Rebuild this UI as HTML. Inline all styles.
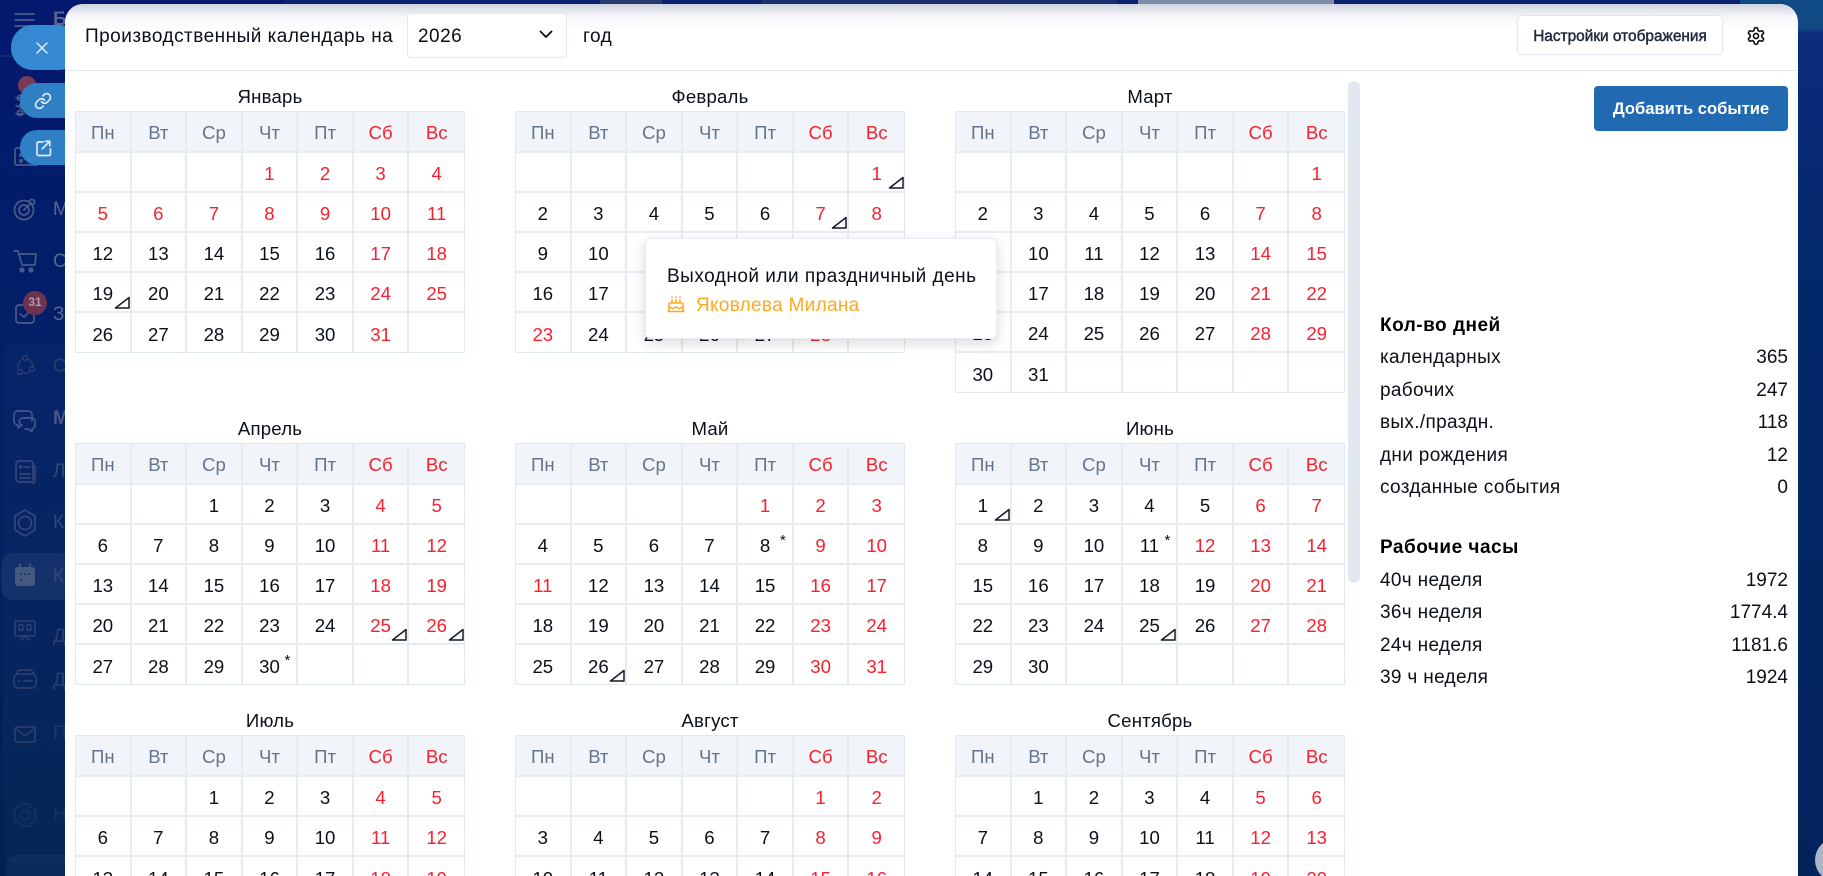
<!DOCTYPE html>
<html lang="ru"><head><meta charset="utf-8"><title>Производственный календарь</title>
<style>
*{box-sizing:border-box}
html,body{margin:0;padding:0;width:1823px;height:876px;overflow:hidden}
body{position:relative;background:linear-gradient(180deg,#04186e 0%,#021f68 35%,#012154 100%);font-family:"Liberation Sans",sans-serif;color:#0b0f19}
.abs{position:absolute}
.side{position:absolute;color:#566690;font-size:19px;left:53px;line-height:22px;white-space:nowrap}
.modal{position:absolute;left:65px;top:4px;width:1733px;height:880px;background:#fff;border-radius:18px 18px 0 0;overflow:hidden}
.modal:before{content:"";position:absolute;left:0;right:0;top:0;height:28px;background:linear-gradient(180deg,rgba(190,195,212,.72),rgba(225,228,236,.3) 45%,rgba(255,255,255,0))}
.hl{position:absolute;left:65px;top:70px;width:1733px;height:1px;background:#e2e8f0}
.t{position:absolute;font-size:19px;letter-spacing:.48px;line-height:24px;white-space:nowrap;margin-top:1px}
.m{position:absolute;width:390px}
.m b{position:absolute;left:0;right:0;top:-26px;text-align:center;font-weight:400;font-size:18.6px;letter-spacing:.2px;line-height:24px;color:#0b0f19}
table{border-collapse:separate;border-spacing:0;width:390px;table-layout:fixed;border-left:1px solid #e2e8f0;border-top:1px solid #e2e8f0}
td,th{position:relative;padding:4px 0 0;text-align:center;font-weight:400;font-size:18.6px;border-right:2px solid #e7ecf3;border-bottom:2px solid #e7ecf3;height:40px;line-height:34px}
tr>*:last-child{border-right:1px solid #e2e8f0}
tr:last-child td{border-bottom:1px solid #e2e8f0}
th{height:41px;background:#f1f5f9;color:#64748b;padding-top:2px;line-height:37px}
.r{color:#f9202e}
th.r{color:#f9202e}
td svg{position:absolute;right:0;bottom:2px;width:16px;height:13px}
td sup{position:absolute;left:calc(50% + 15px);top:4px;font-size:15px;line-height:24px;color:#0b0f19}
.n{letter-spacing:-1.5px;padding-left:3px}
.st{position:absolute;left:1380px;width:408px;display:flex;justify-content:space-between;font-size:19px;line-height:24px;color:#0b0f19;margin-top:1px}
.st span:first-child{letter-spacing:.33px}
.h{position:absolute;left:1380px;font-size:19px;letter-spacing:.5px;font-weight:700;line-height:24px;color:#000;margin-top:1px}
</style></head><body>

<!-- top + right background bits -->
<div class="abs" style="left:285px;top:0;width:1538px;height:6px;background:#0a2270"></div>
<div class="abs" style="left:600px;top:0;width:62px;height:6px;background:#283c73"></div>
<div class="abs" style="left:762px;top:0;width:355px;height:6px;background:#1c2f70"></div>
<div class="abs" style="left:1138px;top:0;width:196px;height:6px;background:#7c8aa6"></div>
<div class="abs" style="left:1740px;top:0;width:83px;height:34px;background:linear-gradient(180deg,#0f4a86,#124a84 80%,#0d2a7c)"></div>
<div class="abs" style="left:1798px;top:34px;width:25px;height:842px;background:linear-gradient(180deg,#0d2a7c,#03286a 30%,#03235c)"></div>
<div class="abs" style="left:1815px;top:838px;width:44px;height:44px;border-radius:50%;background:#aeb5c4"></div>

<!-- dimmed sidebar -->
<svg class="abs" style="left:0;top:0" width="65" height="876" viewBox="0 0 65 876" fill="none" stroke="#4a5b88" stroke-width="1.7" stroke-linecap="round" stroke-linejoin="round">
<path d="M15 14h19M15 20h19M15 26h19"/>
<path d="M2 56h10" stroke="#1a2f70"/>
<rect x="3" y="343" width="70" height="520" rx="12" fill="#fff" fill-opacity=".022" stroke="none"/>
<rect x="1" y="553" width="70" height="47" rx="12" fill="#fff" fill-opacity=".06" stroke="none"/>
<rect x="5" y="855" width="70" height="40" rx="12" fill="#fff" fill-opacity=".04" stroke="none"/>
<circle cx="27" cy="85" r="9" fill="#7a3a55" stroke="none"/>
<path d="M16 98h8M16 106h8M16 114h8"/><circle cx="20" cy="98" r="2.5"/><circle cx="22" cy="106" r="2.5"/><circle cx="20" cy="113" r="2.5"/>
<path d="M20 148h-3a2 2 0 0 0-2 2v13a2 2 0 0 0 2 2h20"/><circle cx="21" cy="155" r="1.2"/><circle cx="21" cy="161" r="1.2"/>
<circle cx="24" cy="210" r="9.5"/><circle cx="24" cy="210" r="5"/><path d="M24 210l7-7"/><circle cx="32" cy="202" r="2.5"/>
<path d="M14 251h4l4 14h13l1-11H19"/><circle cx="22" cy="270" r="1.8" fill="#4a5b88"/><circle cx="31" cy="270" r="1.8" fill="#4a5b88"/>
<rect x="16" y="305" width="18" height="18" rx="3"/><path d="M20 314l4 3 6-6"/>
<circle cx="35" cy="303" r="12" fill="#6f3352" stroke="none"/>
<g stroke="#2b3d6e" stroke-width="1.5"><circle cx="25" cy="358" r="2.4"/><circle cx="20" cy="372" r="2.4"/><circle cx="32" cy="369" r="2.4"/><path d="M21 360a9.5 9.5 0 0 0-3 8M28 359a9.5 9.5 0 0 1 5 7M23 373a9.5 9.5 0 0 0 7-1"/></g>
<g stroke="#44558a"><path d="M32 421v-6a4 4 0 0 0-4-4H18a4 4 0 0 0-4 4v6a4 4 0 0 0 4 4v3l4-3"/><path d="M21 425a4 4 0 0 1 1-7h10a4 4 0 0 1 3 3v5a4 4 0 0 1-3 3v3l-4-3h-3"/></g>
<g stroke="#34467a"><rect x="16" y="461" width="17" height="21" rx="3"/><path d="M33 466h2v15a2 2 0 0 1-2 2h-1M20 474h10M20 478h10M24 467h6"/><circle cx="20.5" cy="467" r="1"/>
<path d="M25 510l10 6v14l-10 6-10-6v-14z"/><circle cx="25" cy="523" r="6.5"/></g>
<rect x="15" y="567" width="20" height="19" rx="3" fill="#45597f" stroke="none"/><path d="M20 564v5M30 564v5" stroke="#45597f"/>
<circle cx="21" cy="574" r="1" fill="#1a2f66" stroke="none"/><circle cx="25" cy="574" r="1" fill="#1a2f66" stroke="none"/><circle cx="29" cy="574" r="1" fill="#1a2f66" stroke="none"/><circle cx="21" cy="580" r="1" fill="#1a2f66" stroke="none"/>
<g stroke="#2c3e6c"><rect x="15" y="621" width="20" height="15" rx="1"/><path d="M25 636l-4 4M25 636l4 4M19 625h4v5h-4zM27 625h4v5h-4z"/>
<rect x="14" y="674" width="22" height="14" rx="4"/><path d="M16 674l3-4h12l3 4M24 681h8M19 681h.5"/>
<rect x="15" y="727" width="20" height="15" rx="2"/><path d="M16 729l9 7 9-7"/></g>
<g stroke="#1a2f60"><circle cx="25" cy="815" r="4.5"/><path d="M21 804h8l2 3 3 1 2 3-1 4 1 4-2 3-3 1-2 3h-8l-2-3-3-1-2-3 1-4-1-4 2-3 3-1z"/></g>
</svg>
<div class="side" style="top:9px;font-weight:700">Б</div>
<div class="side" style="top:199px">Мои</div>
<div class="side" style="top:251px">Сервисы</div>
<div class="side" style="top:304px">Задачи</div>
<div class="side" style="top:356px;color:#2b3d6e">Сообщество</div>
<div class="side" style="top:408px;font-weight:700;color:#47578a">Мессенджер</div>
<div class="side" style="top:461px;color:#34467a">Лента</div>
<div class="side" style="top:512px;color:#34467a">Компания</div>
<div class="side" style="top:566px;color:#34467a">Календарь</div>
<div class="side" style="top:626px;color:#2c3e6c">Документы</div>
<div class="side" style="top:670px;color:#2c3e6c">Диск</div>
<div class="side" style="top:723px;color:#233567">Почта</div>
<div class="side" style="top:804px;color:#1a2f60">Настройки</div>
<div class="abs" style="left:28px;top:296px;width:14px;text-align:center;font-size:12px;font-weight:700;color:#b69aa9;line-height:13px">31</div>

<!-- floating buttons -->
<div class="abs" style="left:11px;top:25px;width:70px;height:45px;border-radius:22px;background:#3588d2"></div>
<div class="abs" style="left:20px;top:83px;width:70px;height:35px;border-radius:17px;background:#2f7fc5"></div>
<div class="abs" style="left:20px;top:130px;width:70px;height:35px;border-radius:17px;background:#2f7fc5"></div>
<svg class="abs" style="left:36px;top:42px" width="12" height="12" viewBox="0 0 12 12" fill="none" stroke="#dcecfa" stroke-width="1.5" stroke-linecap="round"><path d="M1 1l10 10M11 1L1 11"/></svg>
<svg class="abs" style="left:34px;top:92px" width="18" height="18" viewBox="0 0 24 24" fill="none" stroke="#dcecfa" stroke-width="2.2" stroke-linecap="round" stroke-linejoin="round"><path d="M10 13a5 5 0 0 0 7.54.54l3-3a5 5 0 0 0-7.07-7.07l-1.72 1.71"/><path d="M14 11a5 5 0 0 0-7.54-.54l-3 3a5 5 0 0 0 7.07 7.07l1.71-1.71"/></svg>
<svg class="abs" style="left:34px;top:139px" width="18" height="18" viewBox="0 0 24 24" fill="none" stroke="#dcecfa" stroke-width="2.2" stroke-linecap="round" stroke-linejoin="round"><path d="M12 4H6a2 2 0 0 0-2 2v14a2 2 0 0 0 2 2h14a2 2 0 0 0 2-2v-7"/><path d="M11 13L21 3M15 3h6v6"/></svg>

<div class="modal"></div>
<div class="hl"></div>

<!-- header -->
<div class="t" style="left:85px;top:24px">Производственный календарь на</div>
<div class="abs" style="left:407px;top:13px;width:160px;height:45px;border:1px solid #e2e8f0;border-radius:4px;background:#fff"></div>
<div class="t" style="left:418px;top:24px">2026</div>
<svg class="abs" style="left:539px;top:30px" width="14" height="9" viewBox="0 0 14 9" fill="none" stroke="#111" stroke-width="1.9" stroke-linecap="round" stroke-linejoin="round"><path d="M1.5 1.5L7 7l5.5-5.5"/></svg>
<div class="t" style="left:583px;top:24px">год</div>
<div class="abs" style="left:1517px;top:15px;width:206px;height:40px;border:1px solid #e2e8f0;border-radius:5px;background:#fff;text-align:center;font-size:15.4px;line-height:41px;color:#1e293b;-webkit-text-stroke:.45px #1e293b;box-shadow:0 1px 2px rgba(0,0,0,.04)">Настройки отображения</div>
<svg class="abs" style="left:1746px;top:26px" width="20" height="20" viewBox="0 0 24 24" fill="none" stroke="#111" stroke-width="2" stroke-linecap="round" stroke-linejoin="round"><path d="M12.22 2h-.44a2 2 0 0 0-2 2v.18a2 2 0 0 1-1 1.73l-.43.25a2 2 0 0 1-2 0l-.15-.08a2 2 0 0 0-2.73.73l-.22.38a2 2 0 0 0 .73 2.73l.15.1a2 2 0 0 1 1 1.72v.51a2 2 0 0 1-1 1.74l-.15.09a2 2 0 0 0-.73 2.73l.22.38a2 2 0 0 0 2.73.73l.15-.08a2 2 0 0 1 2 0l.43.25a2 2 0 0 1 1 1.73V20a2 2 0 0 0 2 2h.44a2 2 0 0 0 2-2v-.18a2 2 0 0 1 1-1.73l.43-.25a2 2 0 0 1 2 0l.15.08a2 2 0 0 0 2.73-.73l.22-.39a2 2 0 0 0-.73-2.73l-.15-.08a2 2 0 0 1-1-1.74v-.5a2 2 0 0 1 1-1.74l.15-.09a2 2 0 0 0 .73-2.73l-.22-.38a2 2 0 0 0-2.73-.73l-.15.08a2 2 0 0 1-2 0l-.43-.25a2 2 0 0 1-1-1.73V4a2 2 0 0 0-2-2z"/><circle cx="12" cy="12" r="3"/></svg>

<!-- scrollbar -->
<div class="abs" style="left:1348px;top:81px;width:12px;height:502px;border-radius:6px;background:#e2e8f0"></div>

<!-- right panel -->
<div class="abs" style="left:1594px;top:86px;width:194px;height:45px;border-radius:4px;background:#2169b1;color:#fff;text-align:center;font-size:16.6px;font-weight:700;line-height:46px">Добавить событие</div>
<div class="h" style="top:313px">Кол-во дней</div>
<div class="st" style="top:345px"><span>календарных</span><span>365</span></div>
<div class="st" style="top:378px"><span>рабочих</span><span>247</span></div>
<div class="st" style="top:410px"><span>вых./праздн.</span><span>118</span></div>
<div class="st" style="top:443px"><span>дни рождения</span><span>12</span></div>
<div class="st" style="top:475px"><span>созданные события</span><span>0</span></div>
<div class="h" style="top:535px">Рабочие часы</div>
<div class="st" style="top:568px"><span>40ч неделя</span><span>1972</span></div>
<div class="st" style="top:600px"><span>36ч неделя</span><span>1774.4</span></div>
<div class="st" style="top:633px"><span>24ч неделя</span><span>1181.6</span></div>
<div class="st" style="top:665px"><span>39 ч неделя</span><span>1924</span></div>

<!-- January -->
<div class="m" style="left:75px;top:111px"><b>Январь</b><table>
<tr><th>Пн<th>Вт<th>Ср<th>Чт<th>Пт<th class="r">Сб<th class="r">Вс</tr>
<tr><td><td><td><td class="r">1<td class="r">2<td class="r">3<td class="r">4</tr>
<tr><td class="r">5<td class="r">6<td class="r">7<td class="r">8<td class="r">9<td class="r">10<td class="r">11</tr>
<tr><td>12<td>13<td>14<td>15<td>16<td class="r">17<td class="r">18</tr>
<tr><td>19<svg viewBox="0 0 16 13" fill="none" stroke="#111827" stroke-width="1.5" stroke-linejoin="round"><path d="M1.5 12H15V1.500z"/></svg><td>20<td>21<td>22<td>23<td class="r">24<td class="r">25</tr>
<tr><td>26<td>27<td>28<td>29<td>30<td class="r">31<td></tr>
</table></div>

<!-- February -->
<div class="m" style="left:515px;top:111px"><b>Февраль</b><table>
<tr><th>Пн<th>Вт<th>Ср<th>Чт<th>Пт<th class="r">Сб<th class="r">Вс</tr>
<tr><td><td><td><td><td><td><td class="r">1<svg viewBox="0 0 16 13" fill="none" stroke="#111827" stroke-width="1.5" stroke-linejoin="round"><path d="M1.5 12H15V1.500z"/></svg></tr>
<tr><td>2<td>3<td>4<td>5<td>6<td class="r">7<svg viewBox="0 0 16 13" fill="none" stroke="#111827" stroke-width="1.5" stroke-linejoin="round"><path d="M1.5 12H15V1.500z"/></svg><td class="r">8</tr>
<tr><td>9<td>10<td class="n">11<td>12<td>13<td class="r">14<td class="r">15</tr>
<tr><td>16<td>17<td class="n">18<td>19<td>20<td class="r">21<td class="r">22</tr>
<tr><td class="r">23<td>24<td>25<td>26<td>27<td class="r">28<td></tr>
</table></div>

<!-- March -->
<div class="m" style="left:955px;top:111px"><b>Март</b><table>
<tr><th>Пн<th>Вт<th>Ср<th>Чт<th>Пт<th class="r">Сб<th class="r">Вс</tr>
<tr><td><td><td><td><td><td><td class="r">1</tr>
<tr><td>2<td>3<td>4<td>5<td>6<td class="r">7<td class="r">8</tr>
<tr><td>9<td>10<td>11<td>12<td>13<td class="r">14<td class="r">15</tr>
<tr><td>16<td>17<td>18<td>19<td>20<td class="r">21<td class="r">22</tr>
<tr><td>23<td>24<td>25<td>26<td>27<td class="r">28<td class="r">29</tr>
<tr><td>30<td>31<td><td><td><td><td></tr>
</table></div>

<!-- April -->
<div class="m" style="left:75px;top:443px"><b>Апрель</b><table>
<tr><th>Пн<th>Вт<th>Ср<th>Чт<th>Пт<th class="r">Сб<th class="r">Вс</tr>
<tr><td><td><td>1<td>2<td>3<td class="r">4<td class="r">5</tr>
<tr><td>6<td>7<td>8<td>9<td>10<td class="r">11<td class="r">12</tr>
<tr><td>13<td>14<td>15<td>16<td>17<td class="r">18<td class="r">19</tr>
<tr><td>20<td>21<td>22<td>23<td>24<td class="r">25<svg viewBox="0 0 16 13" fill="none" stroke="#111827" stroke-width="1.5" stroke-linejoin="round"><path d="M1.5 12H15V1.500z"/></svg><td class="r">26<svg viewBox="0 0 16 13" fill="none" stroke="#111827" stroke-width="1.5" stroke-linejoin="round"><path d="M1.5 12H15V1.500z"/></svg></tr>
<tr><td>27<td>28<td>29<td>30<sup>*</sup><td><td><td></tr>
</table></div>

<!-- May -->
<div class="m" style="left:515px;top:443px"><b>Май</b><table>
<tr><th>Пн<th>Вт<th>Ср<th>Чт<th>Пт<th class="r">Сб<th class="r">Вс</tr>
<tr><td><td><td><td><td class="r">1<td class="r">2<td class="r">3</tr>
<tr><td>4<td>5<td>6<td>7<td>8<sup>*</sup><td class="r">9<td class="r">10</tr>
<tr><td class="r">11<td>12<td>13<td>14<td>15<td class="r">16<td class="r">17</tr>
<tr><td>18<td>19<td>20<td>21<td>22<td class="r">23<td class="r">24</tr>
<tr><td>25<td>26<svg viewBox="0 0 16 13" fill="none" stroke="#111827" stroke-width="1.5" stroke-linejoin="round"><path d="M1.5 12H15V1.500z"/></svg><td>27<td>28<td>29<td class="r">30<td class="r">31</tr>
</table></div>

<!-- June -->
<div class="m" style="left:955px;top:443px"><b>Июнь</b><table>
<tr><th>Пн<th>Вт<th>Ср<th>Чт<th>Пт<th class="r">Сб<th class="r">Вс</tr>
<tr><td>1<svg viewBox="0 0 16 13" fill="none" stroke="#111827" stroke-width="1.5" stroke-linejoin="round"><path d="M1.5 12H15V1.500z"/></svg><td>2<td>3<td>4<td>5<td class="r">6<td class="r">7</tr>
<tr><td>8<td>9<td>10<td>11<sup>*</sup><td class="r">12<td class="r">13<td class="r">14</tr>
<tr><td>15<td>16<td>17<td>18<td>19<td class="r">20<td class="r">21</tr>
<tr><td>22<td>23<td>24<td>25<svg viewBox="0 0 16 13" fill="none" stroke="#111827" stroke-width="1.5" stroke-linejoin="round"><path d="M1.5 12H15V1.500z"/></svg><td>26<td class="r">27<td class="r">28</tr>
<tr><td>29<td>30<td><td><td><td><td></tr>
</table></div>

<!-- July -->
<div class="m" style="left:75px;top:735px"><b>Июль</b><table>
<tr><th>Пн<th>Вт<th>Ср<th>Чт<th>Пт<th class="r">Сб<th class="r">Вс</tr>
<tr><td><td><td>1<td>2<td>3<td class="r">4<td class="r">5</tr>
<tr><td>6<td>7<td>8<td>9<td>10<td class="r">11<td class="r">12</tr>
<tr><td>13<td>14<td>15<td>16<td>17<td class="r">18<td class="r">19</tr>
</table></div>

<!-- August -->
<div class="m" style="left:515px;top:735px"><b>Август</b><table>
<tr><th>Пн<th>Вт<th>Ср<th>Чт<th>Пт<th class="r">Сб<th class="r">Вс</tr>
<tr><td><td><td><td><td><td class="r">1<td class="r">2</tr>
<tr><td>3<td>4<td>5<td>6<td>7<td class="r">8<td class="r">9</tr>
<tr><td>10<td>11<td>12<td>13<td>14<td class="r">15<td class="r">16</tr>
</table></div>

<!-- September -->
<div class="m" style="left:955px;top:735px"><b>Сентябрь</b><table>
<tr><th>Пн<th>Вт<th>Ср<th>Чт<th>Пт<th class="r">Сб<th class="r">Вс</tr>
<tr><td><td>1<td>2<td>3<td>4<td class="r">5<td class="r">6</tr>
<tr><td>7<td>8<td>9<td>10<td>11<td class="r">12<td class="r">13</tr>
<tr><td>14<td>15<td>16<td>17<td>18<td class="r">19<td class="r">20</tr>
</table></div>

<!-- popup -->
<div class="abs" style="left:645px;top:238px;width:352px;height:101px;background:#fff;border:1px solid #e9edf3;border-radius:6px;box-shadow:0 4px 12px rgba(15,23,42,.16)"></div>
<div class="t" style="left:667px;top:264px;font-size:19px;letter-spacing:.5px">Выходной или праздничный день</div>
<svg class="abs" style="left:666px;top:295px" width="20" height="18" viewBox="0 0 20 18" fill="none" stroke="#ffa91f" stroke-width="1.6" stroke-linecap="round" stroke-linejoin="round"><path d="M2 16.5h16M3 16.500V9.500a1.500 1.500 0 0 1 1.500-1.500h11A1.500 1.500 0 0 1 17 9.500v7M3 12c2 0 2 1.500 3.500 1.500S8.500 12 10 12s2 1.500 3.500 1.500S15 12 17 12M6 8V5M10 8V5M14 8V5M6 2v.5M10 2v.5M14 2v.5"/></svg>
<div class="t" style="left:696px;top:293px;font-size:19px;letter-spacing:.3px;color:#ffa91f">Яковлева Милана</div>
</body></html>
